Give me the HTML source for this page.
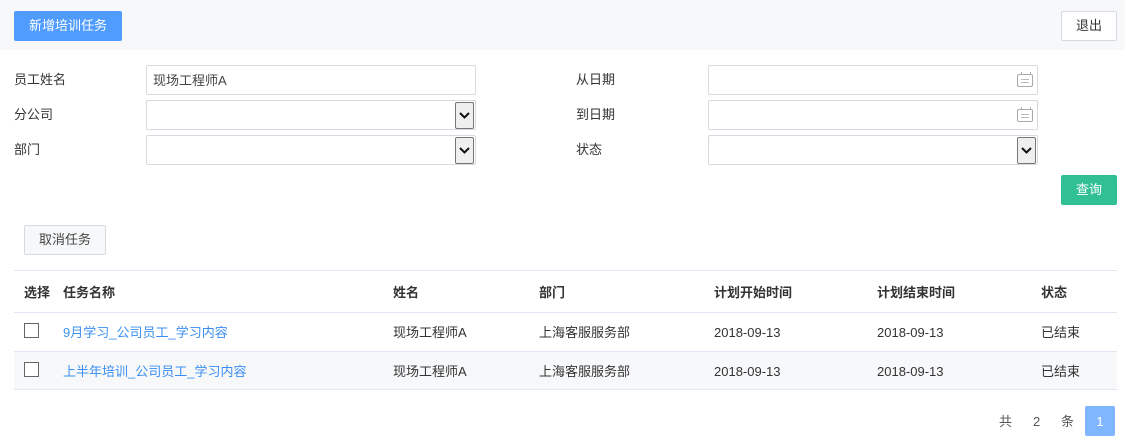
<!DOCTYPE html>
<html><head><meta charset="utf-8"><style>
*{box-sizing:border-box;margin:0;padding:0}
body{width:1125px;height:440px;background:#fff;font-family:"Liberation Sans","Noto Sans CJK SC",sans-serif;font-size:13px;color:#333;position:relative;overflow:hidden}
.a{position:absolute}
.top{left:0;top:0;width:1125px;height:50px;background:#f7f8fa}
.btn{position:absolute;display:flex;align-items:center;justify-content:center;border-radius:2px;padding-bottom:3px}
.inp{position:absolute;height:30px;border:1px solid #d9d9e0;border-radius:2px;background:#fff;font-size:13px;padding-left:6px;line-height:29px;color:#444}
.sel{position:absolute;right:1px;top:1px;width:19px;height:27px;background:#efefef;border:1px solid #777;border-radius:2px}
.cal{position:absolute;right:4px;top:8px;width:16px;height:13px;border:1px solid #aaa;border-radius:2px}
.cal:before{content:"";position:absolute;left:3px;top:4px;width:8px;height:1px;background:#bbb;box-shadow:0 3px 0 #bbb}
.cal:after{content:"";position:absolute;left:3px;top:-3px;width:8px;height:3px;border-left:1px solid #aaa;border-right:1px solid #aaa}
.lbl{position:absolute;font-size:13px;color:#333}
.th{position:absolute;font-weight:bold;color:#333}
.hl{position:absolute;left:14px;width:1103px;height:1px;background:#e4e4f2}
.cb{position:absolute;left:24px;width:15px;height:15px;border:1px solid #666;background:#fff}
a{color:#3b8ff0;text-decoration:none}
</style></head><body>
<div class="a top"></div>
<div class="btn" style="left:14px;top:11px;width:108px;height:30px;background:#4f9cfe;color:#fff">新增培训任务</div>
<div class="btn" style="left:1061px;top:11px;width:56px;height:30px;background:#fff;border:1px solid #d9d9e0;color:#333">退出</div>

<div class="lbl" style="left:14px;top:69px">员工姓名</div>
<div class="lbl" style="left:14px;top:104px">分公司</div>
<div class="lbl" style="left:14px;top:139px">部门</div>
<div class="inp" style="left:146px;top:65px;width:330px">现场工程师A</div>
<div class="inp" style="left:146px;top:100px;width:330px"><div class="sel"><svg width="17" height="25"><path d="M4 10l4.5 4.5L13 10" fill="none" stroke="#111" stroke-width="2"/></svg></div></div>
<div class="inp" style="left:146px;top:135px;width:330px"><div class="sel"><svg width="17" height="25"><path d="M4 10l4.5 4.5L13 10" fill="none" stroke="#111" stroke-width="2"/></svg></div></div>

<div class="lbl" style="left:576px;top:69px">从日期</div>
<div class="lbl" style="left:576px;top:104px">到日期</div>
<div class="lbl" style="left:576px;top:139px">状态</div>
<div class="inp" style="left:708px;top:65px;width:330px"><div class="cal"></div></div>
<div class="inp" style="left:708px;top:100px;width:330px"><div class="cal"></div></div>
<div class="inp" style="left:708px;top:135px;width:330px"><div class="sel"><svg width="17" height="25"><path d="M4 10l4.5 4.5L13 10" fill="none" stroke="#111" stroke-width="2"/></svg></div></div>

<div class="btn" style="left:1061px;top:175px;width:56px;height:30px;background:#30c094;color:#fff">查询</div>
<div class="btn" style="left:24px;top:225px;width:82px;height:30px;background:#f7f8fa;border:1px solid #d9d9e0;color:#444">取消任务</div>

<div class="hl" style="top:270px"></div>
<div class="th" style="left:24px;top:282px">选择</div>
<div class="th" style="left:63px;top:282px">任务名称</div>
<div class="th" style="left:393px;top:282px">姓名</div>
<div class="th" style="left:539px;top:282px">部门</div>
<div class="th" style="left:714px;top:282px">计划开始时间</div>
<div class="th" style="left:877px;top:282px">计划结束时间</div>
<div class="th" style="left:1041px;top:282px">状态</div>
<div class="hl" style="top:312px"></div>
<div class="cb" style="top:323px"></div>
<div class="a" style="left:63px;top:322px"><a>9月学习_公司员工_学习内容</a></div>
<div class="a" style="left:393px;top:322px">现场工程师A</div>
<div class="a" style="left:539px;top:322px">上海客服服务部</div>
<div class="a" style="left:714px;top:325px">2018-09-13</div>
<div class="a" style="left:877px;top:325px">2018-09-13</div>
<div class="a" style="left:1041px;top:322px">已结束</div>
<div class="a" style="left:14px;top:351px;width:1103px;height:39px;background:#f7f8fa;border-top:1px solid #e4e4f2;border-bottom:1px solid #e4e4f2"></div>
<div class="cb" style="top:362px"></div>
<div class="a" style="left:63px;top:361px"><a>上半年培训_公司员工_学习内容</a></div>
<div class="a" style="left:393px;top:361px">现场工程师A</div>
<div class="a" style="left:539px;top:361px">上海客服服务部</div>
<div class="a" style="left:714px;top:364px">2018-09-13</div>
<div class="a" style="left:877px;top:364px">2018-09-13</div>
<div class="a" style="left:1041px;top:361px">已结束</div>

<div class="a" style="left:999px;top:411px;color:#555">共</div>
<div class="a" style="left:1033px;top:414px;color:#555">2</div>
<div class="a" style="left:1061px;top:411px;color:#555">条</div>
<div class="btn" style="left:1085px;top:406px;width:30px;height:30px;background:#7fb6fd;color:#fff;padding-bottom:0">1</div>
</body></html>
